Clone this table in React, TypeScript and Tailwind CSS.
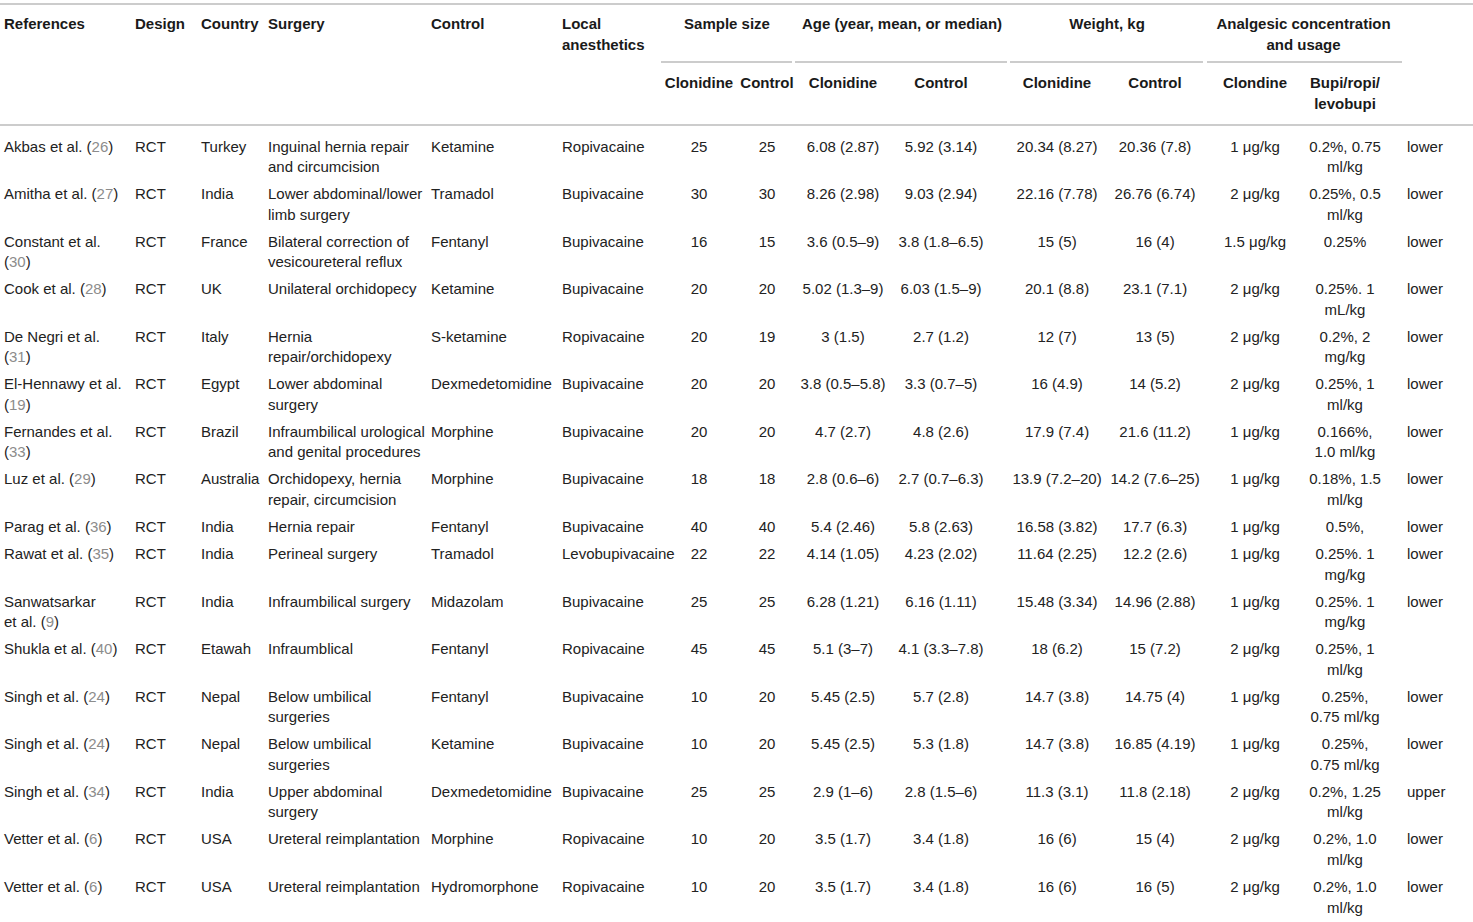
import React from "react";

type Row = {
  author: string;
  ref: string;
  design: string;
  country: string;
  surgery: React.ReactNode;
  control: string;
  local: string;
  ssClon: string;
  ssCtrl: string;
  ageClon: string;
  ageCtrl: string;
  wtClon: string;
  wtCtrl: string;
  dose: string;
  conc: string;
  site: string;
};

const rows: Row[] = [
  { author: "Akbas", ref: "26", design: "RCT", country: "Turkey", surgery: "Inguinal hernia repair and circumcision", control: "Ketamine", local: "Ropivacaine", ssClon: "25", ssCtrl: "25", ageClon: "6.08 (2.87)", ageCtrl: "5.92 (3.14)", wtClon: "20.34 (8.27)", wtCtrl: "20.36 (7.8)", dose: "1 μg/kg", conc: "0.2%, 0.75 ml/kg", site: "lower" },
  { author: "Amitha", ref: "27", design: "RCT", country: "India", surgery: "Lower abdominal/lower limb surgery", control: "Tramadol", local: "Bupivacaine", ssClon: "30", ssCtrl: "30", ageClon: "8.26 (2.98)", ageCtrl: "9.03 (2.94)", wtClon: "22.16 (7.78)", wtCtrl: "26.76 (6.74)", dose: "2 μg/kg", conc: "0.25%, 0.5 ml/kg", site: "lower" },
  { author: "Constant", ref: "30", design: "RCT", country: "France", surgery: "Bilateral correction of vesicoureteral reflux", control: "Fentanyl", local: "Bupivacaine", ssClon: "16", ssCtrl: "15", ageClon: "3.6 (0.5–9)", ageCtrl: "3.8 (1.8–6.5)", wtClon: "15 (5)", wtCtrl: "16 (4)", dose: "1.5 μg/kg", conc: "0.25%", site: "lower" },
  { author: "Cook", ref: "28", design: "RCT", country: "UK", surgery: "Unilateral orchidopecy", control: "Ketamine", local: "Bupivacaine", ssClon: "20", ssCtrl: "20", ageClon: "5.02 (1.3–9)", ageCtrl: "6.03 (1.5–9)", wtClon: "20.1 (8.8)", wtCtrl: "23.1 (7.1)", dose: "2 μg/kg", conc: "0.25%. 1 mL/kg", site: "lower" },
  { author: "De Negri", ref: "31", design: "RCT", country: "Italy", surgery: (<>Hernia <span className="whitespace-nowrap">repair/orchidopexy</span></>), control: "S-ketamine", local: "Ropivacaine", ssClon: "20", ssCtrl: "19", ageClon: "3 (1.5)", ageCtrl: "2.7 (1.2)", wtClon: "12 (7)", wtCtrl: "13 (5)", dose: "2 μg/kg", conc: "0.2%, 2 mg/kg", site: "lower" },
  { author: "El-Hennawy", ref: "19", design: "RCT", country: "Egypt", surgery: "Lower abdominal surgery", control: "Dexmedetomidine", local: "Bupivacaine", ssClon: "20", ssCtrl: "20", ageClon: "3.8 (0.5–5.8)", ageCtrl: "3.3 (0.7–5)", wtClon: "16 (4.9)", wtCtrl: "14 (5.2)", dose: "2 μg/kg", conc: "0.25%, 1 ml/kg", site: "lower" },
  { author: "Fernandes", ref: "33", design: "RCT", country: "Brazil", surgery: "Infraumbilical urological and genital procedures", control: "Morphine", local: "Bupivacaine", ssClon: "20", ssCtrl: "20", ageClon: "4.7 (2.7)", ageCtrl: "4.8 (2.6)", wtClon: "17.9 (7.4)", wtCtrl: "21.6 (11.2)", dose: "1 μg/kg", conc: "0.166%, 1.0 ml/kg", site: "lower" },
  { author: "Luz", ref: "29", design: "RCT", country: "Australia", surgery: "Orchidopexy, hernia repair, circumcision", control: "Morphine", local: "Bupivacaine", ssClon: "18", ssCtrl: "18", ageClon: "2.8 (0.6–6)", ageCtrl: "2.7 (0.7–6.3)", wtClon: "13.9 (7.2–20)", wtCtrl: "14.2 (7.6–25)", dose: "1 μg/kg", conc: "0.18%, 1.5 ml/kg", site: "lower" },
  { author: "Parag", ref: "36", design: "RCT", country: "India", surgery: "Hernia repair", control: "Fentanyl", local: "Bupivacaine", ssClon: "40", ssCtrl: "40", ageClon: "5.4 (2.46)", ageCtrl: "5.8 (2.63)", wtClon: "16.58 (3.82)", wtCtrl: "17.7 (6.3)", dose: "1 μg/kg", conc: "0.5%,", site: "lower" },
  { author: "Rawat", ref: "35", design: "RCT", country: "India", surgery: "Perineal surgery", control: "Tramadol", local: "Levobupivacaine", ssClon: "22", ssCtrl: "22", ageClon: "4.14 (1.05)", ageCtrl: "4.23 (2.02)", wtClon: "11.64 (2.25)", wtCtrl: "12.2 (2.6)", dose: "1 μg/kg", conc: "0.25%. 1 mg/kg", site: "lower" },
  { author: "Sanwatsarkar", ref: "9", design: "RCT", country: "India", surgery: "Infraumbilical surgery", control: "Midazolam", local: "Bupivacaine", ssClon: "25", ssCtrl: "25", ageClon: "6.28 (1.21)", ageCtrl: "6.16 (1.11)", wtClon: "15.48 (3.34)", wtCtrl: "14.96 (2.88)", dose: "1 μg/kg", conc: "0.25%. 1 mg/kg", site: "lower" },
  { author: "Shukla", ref: "40", design: "RCT", country: "Etawah", surgery: "Infraumblical", control: "Fentanyl", local: "Ropivacaine", ssClon: "45", ssCtrl: "45", ageClon: "5.1 (3–7)", ageCtrl: "4.1 (3.3–7.8)", wtClon: "18 (6.2)", wtCtrl: "15 (7.2)", dose: "2 μg/kg", conc: "0.25%, 1 ml/kg", site: "" },
  { author: "Singh", ref: "24", design: "RCT", country: "Nepal", surgery: "Below umbilical surgeries", control: "Fentanyl", local: "Bupivacaine", ssClon: "10", ssCtrl: "20", ageClon: "5.45 (2.5)", ageCtrl: "5.7 (2.8)", wtClon: "14.7 (3.8)", wtCtrl: "14.75 (4)", dose: "1 μg/kg", conc: "0.25%, 0.75 ml/kg", site: "lower" },
  { author: "Singh", ref: "24", design: "RCT", country: "Nepal", surgery: "Below umbilical surgeries", control: "Ketamine", local: "Bupivacaine", ssClon: "10", ssCtrl: "20", ageClon: "5.45 (2.5)", ageCtrl: "5.3 (1.8)", wtClon: "14.7 (3.8)", wtCtrl: "16.85 (4.19)", dose: "1 μg/kg", conc: "0.25%, 0.75 ml/kg", site: "lower" },
  { author: "Singh", ref: "34", design: "RCT", country: "India", surgery: "Upper abdominal surgery", control: "Dexmedetomidine", local: "Bupivacaine", ssClon: "25", ssCtrl: "25", ageClon: "2.9 (1–6)", ageCtrl: "2.8 (1.5–6)", wtClon: "11.3 (3.1)", wtCtrl: "11.8 (2.18)", dose: "2 μg/kg", conc: "0.2%, 1.25 ml/kg", site: "upper" },
  { author: "Vetter", ref: "6", design: "RCT", country: "USA", surgery: "Ureteral reimplantation", control: "Morphine", local: "Ropivacaine", ssClon: "10", ssCtrl: "20", ageClon: "3.5 (1.7)", ageCtrl: "3.4 (1.8)", wtClon: "16 (6)", wtCtrl: "15 (4)", dose: "2 μg/kg", conc: "0.2%, 1.0 ml/kg", site: "lower" },
  { author: "Vetter", ref: "6", design: "RCT", country: "USA", surgery: "Ureteral reimplantation", control: "Hydromorphone", local: "Ropivacaine", ssClon: "10", ssCtrl: "20", ageClon: "3.5 (1.7)", ageCtrl: "3.4 (1.8)", wtClon: "16 (6)", wtCtrl: "16 (5)", dose: "2 μg/kg", conc: "0.2%, 1.0 ml/kg", site: "lower" },
];

const widths = [130, 67, 67, 163, 131, 101, 80, 56, 96, 118, 96, 100, 100, 97, 71];

export default function App() {
  const line = "border-b-2 border-[#cccccc]";

  return (
    <div
      className="w-[1473px] bg-white pt-[3px] text-[15px] text-[#222222]"
      style={{ fontFamily: '"Liberation Sans", Arial, sans-serif' }}
    >
      <table className="w-[1473px] table-fixed border-separate border-spacing-0 border-t-2 border-[#cccccc]">
        <colgroup>
          {widths.map((w, i) => (
            <col key={i} style={{ width: w }} />
          ))}
        </colgroup>
        <thead className="font-bold leading-[21px] text-[#1a1a1a]">
          <tr>
            <th rowSpan={2} className={`pl-[4px] pt-[7.5px] text-left align-top ${line}`}>References</th>
            <th rowSpan={2} className={`pl-[5px] pt-[7.5px] text-left align-top ${line}`}>Design</th>
            <th rowSpan={2} className={`pl-[4px] pt-[7.5px] text-left align-top ${line}`}>Country</th>
            <th rowSpan={2} className={`pl-[4px] pt-[7.5px] text-left align-top ${line}`}>Surgery</th>
            <th rowSpan={2} className={`pl-[4px] pt-[7.5px] text-left align-top ${line}`}>Control</th>
            <th rowSpan={2} className={`pl-[4px] pt-[7.5px] text-left align-top ${line}`}>Local anesthetics</th>
            <th colSpan={2} className="p-0 align-top">
              <div className="flex h-[58px] flex-col justify-between">
                <div className="pt-[7.5px] text-center">Sample size</div>
                <div className="ml-[2px] mr-[3px] h-[2px] bg-[#cccccc]" />
              </div>
            </th>
            <th colSpan={2} className="p-0 align-top">
              <div className="flex h-[58px] flex-col justify-between">
                <div className="pt-[7.5px] text-center">Age (year, mean, or median)</div>
                <div className="ml-0 mr-[2px] h-[2px] bg-[#cccccc]" />
              </div>
            </th>
            <th colSpan={2} className="p-0 align-top">
              <div className="flex h-[58px] flex-col justify-between">
                <div className="pt-[7.5px] text-center">Weight, kg</div>
                <div className="ml-[1px] mr-[2px] h-[2px] bg-[#cccccc]" />
              </div>
            </th>
            <th colSpan={2} className="p-0 align-top">
              <div className="flex h-[58px] flex-col justify-between">
                <div className="px-2 pt-[7.5px] text-center">Analgesic concentration and usage</div>
                <div className="ml-[2px] mr-0 h-[2px] bg-[#cccccc]" />
              </div>
            </th>
            <th rowSpan={2} className={line} />
          </tr>
          <tr>
            <th className={`px-0 pt-[8.5px] pb-[10.5px] text-center align-top ${line}`}>Clonidine</th>
            <th className={`px-0 pt-[8.5px] pb-[10.5px] text-center align-top ${line}`}>Control</th>
            <th className={`px-0 pt-[8.5px] pb-[10.5px] text-center align-top ${line}`}>Clonidine</th>
            <th className={`pl-0 pr-[18px] pt-[8.5px] pb-[10.5px] text-center align-top ${line}`}>Control</th>
            <th className={`px-0 pt-[8.5px] pb-[10.5px] text-center align-top ${line}`}>Clonidine</th>
            <th className={`px-0 pt-[8.5px] pb-[10.5px] text-center align-top ${line}`}>Control</th>
            <th className={`px-0 pt-[8.5px] pb-[10.5px] text-center align-top ${line}`}>Clondine</th>
            <th className={`pl-[1px] pr-[18px] pt-[8.5px] pb-[10.5px] text-center align-top ${line}`}>Bupi/ropi/ levobupi</th>
          </tr>
        </thead>
        <tbody className="leading-[20.6px]">
          {rows.map((r, i) => {
            const py = i === 0 ? "pt-[10.5px] pb-[3.2px]" : "py-[3.2px]";
            return (
              <tr key={i} className="align-top">
                <td className={`pl-[4px] pr-[2px] ${py}`}>
                  <span>{r.author}</span>{" "}
                  <span className="whitespace-nowrap">et al.</span>{" "}
                  <span className="whitespace-nowrap">
                    (<span className="text-[#8c8c8c]">{r.ref}</span>)
                  </span>
                </td>
                <td className={`pl-[5px] ${py}`}>{r.design}</td>
                <td className={`pl-[4px] ${py}`}>{r.country}</td>
                <td className={`pl-[4px] pr-0 ${py}`}>{r.surgery}</td>
                <td className={`pl-[4px] ${py}`}>{r.control}</td>
                <td className={`pl-[4px] ${py}`}>{r.local}</td>
                <td className={`text-center ${py}`}>{r.ssClon}</td>
                <td className={`text-center ${py}`}>{r.ssCtrl}</td>
                <td className={`text-center ${py}`}>{r.ageClon}</td>
                <td className={`pr-[18px] text-center ${py}`}>{r.ageCtrl}</td>
                <td className={`text-center ${py}`}>{r.wtClon}</td>
                <td className={`text-center ${py}`}>{r.wtCtrl}</td>
                <td className={`text-center ${py}`}>{r.dose}</td>
                <td className={`pl-[1px] pr-[18px] text-center ${py}`}>{r.conc}</td>
                <td className={`pl-[5px] ${py}`}>{r.site}</td>
              </tr>
            );
          })}
        </tbody>
      </table>
    </div>
  );
}
